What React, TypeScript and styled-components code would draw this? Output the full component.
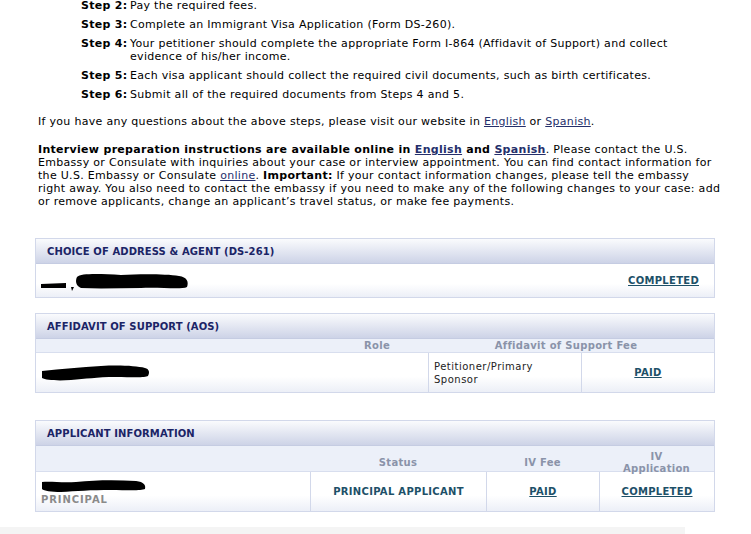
import styled, { createGlobalStyle } from "styled-components";

const GlobalStyle = createGlobalStyle`
  html, body {
    margin: 0;
    padding: 0;
    background: #ffffff;
    font-family: "DejaVu Sans", Verdana, sans-serif;
    font-size: 11px;
    letter-spacing: 0.3px;
    color: #000;
  }
`;

const Page = styled.div`
  width: 751px;
  height: 534px;
  overflow: hidden;
  display: flex;
  flex-direction: column;
`;

const Content = styled.div`
  padding: 0 25px 0 38px;
`;

const Steps = styled.div`
  margin: -1px 0 0 43px;
  display: flex;
  flex-direction: column;
  gap: 6px;
`;

const Step = styled.div`
  display: grid;
  grid-template-columns: 49px 1fr;
  line-height: 13px;
`;

const StepLabel = styled.b`
  font-weight: bold;
`;

const Para = styled.p<{ $top: number }>`
  margin: ${(p) => p.$top}px 0 0;
  line-height: 13px;
`;

const Link = styled.a`
  color: #252f6b;
  text-decoration: underline;
`;

const Section = styled.div<{ $top: number }>`
  margin: ${(p) => p.$top}px 0 0 35px;
  width: 678px;
  border: 1px solid #d2d8ea;
`;

const Header = styled.div`
  height: 24px;
  border-bottom: 1px solid #c5cce2;
  background: linear-gradient(#fafbfd, #cdd3e7);
  display: flex;
  align-items: center;
  padding-left: 11px;
  font-size: 10px;
  font-weight: bold;
  letter-spacing: 0.1px;
  color: #1b2466;
`;

const SubHeader = styled.div<{ $cols: string; $h: number; $pad?: number }>`
  display: grid;
  grid-template-columns: ${(p) => p.$cols};
  height: ${(p) => p.$h}px;
  padding-top: ${(p) => p.$pad || 0}px;
  box-sizing: border-box;
  background: #ecf0f9;
  border-bottom: 1px solid #d8deee;
  color: #8a93a9;
  font-size: 10px;
  font-weight: bold;
  letter-spacing: 0.3px;
  line-height: 12px;
`;

const SubCell = styled.div`
  display: flex;
  align-items: center;
  justify-content: center;
  text-align: center;
`;

const Row = styled.div<{ $cols: string; $h: number }>`
  display: grid;
  grid-template-columns: ${(p) => p.$cols};
  height: ${(p) => p.$h}px;
  background: linear-gradient(#ffffff 60%, #eceff7);
`;

const Cell = styled.div<{ $align?: string; $line?: boolean }>`
  display: flex;
  flex-direction: column;
  justify-content: center;
  align-items: ${(p) => p.$align || "center"};
  border-left: ${(p) => (p.$line ? "1px solid #d2d8ea" : "none")};
  padding: 0 5px;
`;

const StatusLink = styled.a<{ $plain?: boolean }>`
  color: #1d5068;
  font-size: 10px;
  font-weight: bold;
  letter-spacing: 0.3px;
  text-decoration: ${(p) => (p.$plain ? "none" : "underline")};
`;

const SmallText = styled.div`
  font-size: 10px;
  line-height: 13px;
  letter-spacing: 0.5px;
  color: #222;
`;

const Role = styled.div`
  font-size: 10px;
  font-weight: bold;
  letter-spacing: 0.9px;
  color: #8a8a8a;
  margin-top: 1px;
`;

const FooterBar = styled.div`
  margin-top: 15px;
  width: 685px;
  height: 10px;
  background: #f4f4f4;
`;

const Blob = ({ w, h, d }: { w: number; h: number; d: string }) => (
  <svg width={w} height={h} viewBox={`0 0 ${w} ${h}`}>
    <path d={d} fill="#000" />
  </svg>
);

export default function App() {
  return (
    <Page>
      <GlobalStyle />
      <Content>
        <Steps>
          <Step>
            <StepLabel>Step 2:</StepLabel>
            <span>Pay the required fees.</span>
          </Step>
          <Step>
            <StepLabel>Step 3:</StepLabel>
            <span>Complete an Immigrant Visa Application (Form DS-260).</span>
          </Step>
          <Step>
            <StepLabel>Step 4:</StepLabel>
            <span>
              Your petitioner should complete the appropriate Form I-864 (Affidavit of Support) and collect
              <br />
              evidence of his/her income.
            </span>
          </Step>
          <Step>
            <StepLabel>Step 5:</StepLabel>
            <span>Each visa applicant should collect the required civil documents, such as birth certificates.</span>
          </Step>
          <Step>
            <StepLabel>Step 6:</StepLabel>
            <span>Submit all of the required documents from Steps 4 and 5.</span>
          </Step>
        </Steps>
        <Para $top={14}>
          If you have any questions about the above steps, please visit our website in <Link href="#">English</Link> or{" "}
          <Link href="#">Spanish</Link>.
        </Para>
        <Para $top={15}>
          <b>
            Interview preparation instructions are available online in <Link href="#">English</Link> and{" "}
            <Link href="#">Spanish</Link>
          </b>
          . Please contact the U.S.
          <br />
          Embassy or Consulate with inquiries about your case or interview appointment. You can find contact information
          for
          <br />
          the U.S. Embassy or Consulate <Link href="#">online</Link>. <b>Important:</b> If your contact information
          changes, please tell the embassy
          <br />
          right away. You also need to contact the embassy if you need to make any of the following changes to your
          case: add
          <br />
          or remove applicants, change an applicant’s travel status, or make fee payments.
        </Para>
      </Content>

      <Section $top={30}>
        <Header>CHOICE OF ADDRESS &amp; AGENT (DS-261)</Header>
        <Row $cols="1fr auto" $h={33}>
          <Cell $align="flex-start">
            <Blob
              w={150}
              h={20}
              d="M0 13 L25 12 L25 17 L0 17 Z M30 16 L33 16 L31 20 Z M36 6 C40 2 60 3 80 4 C100 3 125 3 138 5 C146 6 148 11 146 16 C140 19 120 16 100 17 C80 17 60 18 40 17 C35 15 34 10 36 6 Z"
            />
          </Cell>
          <Cell>
            <StatusLink href="#" style={{ marginRight: 10 }}>
              COMPLETED
            </StatusLink>
          </Cell>
        </Row>
      </Section>

      <Section $top={15}>
        <Header>AFFIDAVIT OF SUPPORT (AOS)</Header>
        <SubHeader $cols="293px 96px 282px 1fr" $h={14}>
          <SubCell />
          <SubCell>Role</SubCell>
          <SubCell>Affidavit of Support Fee</SubCell>
          <SubCell />
        </SubHeader>
        <Row $cols="392px 153px 1fr" $h={39}>
          <Cell $align="flex-start">
            <Blob
              w={110}
              h={16}
              d="M1 6 C20 4 40 2 60 1 C80 0 95 1 104 3 C108 4 109 7 107 11 C104 13 90 12 75 12 C55 12 45 14 30 15 C15 16 5 15 1 13 Z"
            />
          </Cell>
          <Cell $line $align="flex-start">
            <SmallText>
              Petitioner/Primary
              <br />
              Sponsor
            </SmallText>
          </Cell>
          <Cell $line>
            <StatusLink href="#">PAID</StatusLink>
          </Cell>
        </Row>
      </Section>

      <Section $top={27}>
        <Header>APPLICANT INFORMATION</Header>
        <SubHeader $cols="274px 176px 113px 1fr" $h={26} $pad={5}>
          <SubCell />
          <SubCell>Status</SubCell>
          <SubCell>IV Fee</SubCell>
          <SubCell>
            IV
            <br />
            Application
          </SubCell>
        </SubHeader>
        <Row $cols="274px 176px 113px 1fr" $h={39}>
          <Cell $align="flex-start">
            <Blob
              w={106}
              h={14}
              d="M1 3 C10 2 20 4 35 3 C55 1 75 1 95 2 C103 3 105 6 104 10 C100 12 85 11 70 11 C50 11 35 12 20 13 C10 13 3 12 1 10 Z"
            />
            <Role>PRINCIPAL</Role>
          </Cell>
          <Cell $line>
            <StatusLink $plain>PRINCIPAL APPLICANT</StatusLink>
          </Cell>
          <Cell $line>
            <StatusLink href="#">PAID</StatusLink>
          </Cell>
          <Cell $line>
            <StatusLink href="#">COMPLETED</StatusLink>
          </Cell>
        </Row>
      </Section>
      <FooterBar />
    </Page>
  );
}
